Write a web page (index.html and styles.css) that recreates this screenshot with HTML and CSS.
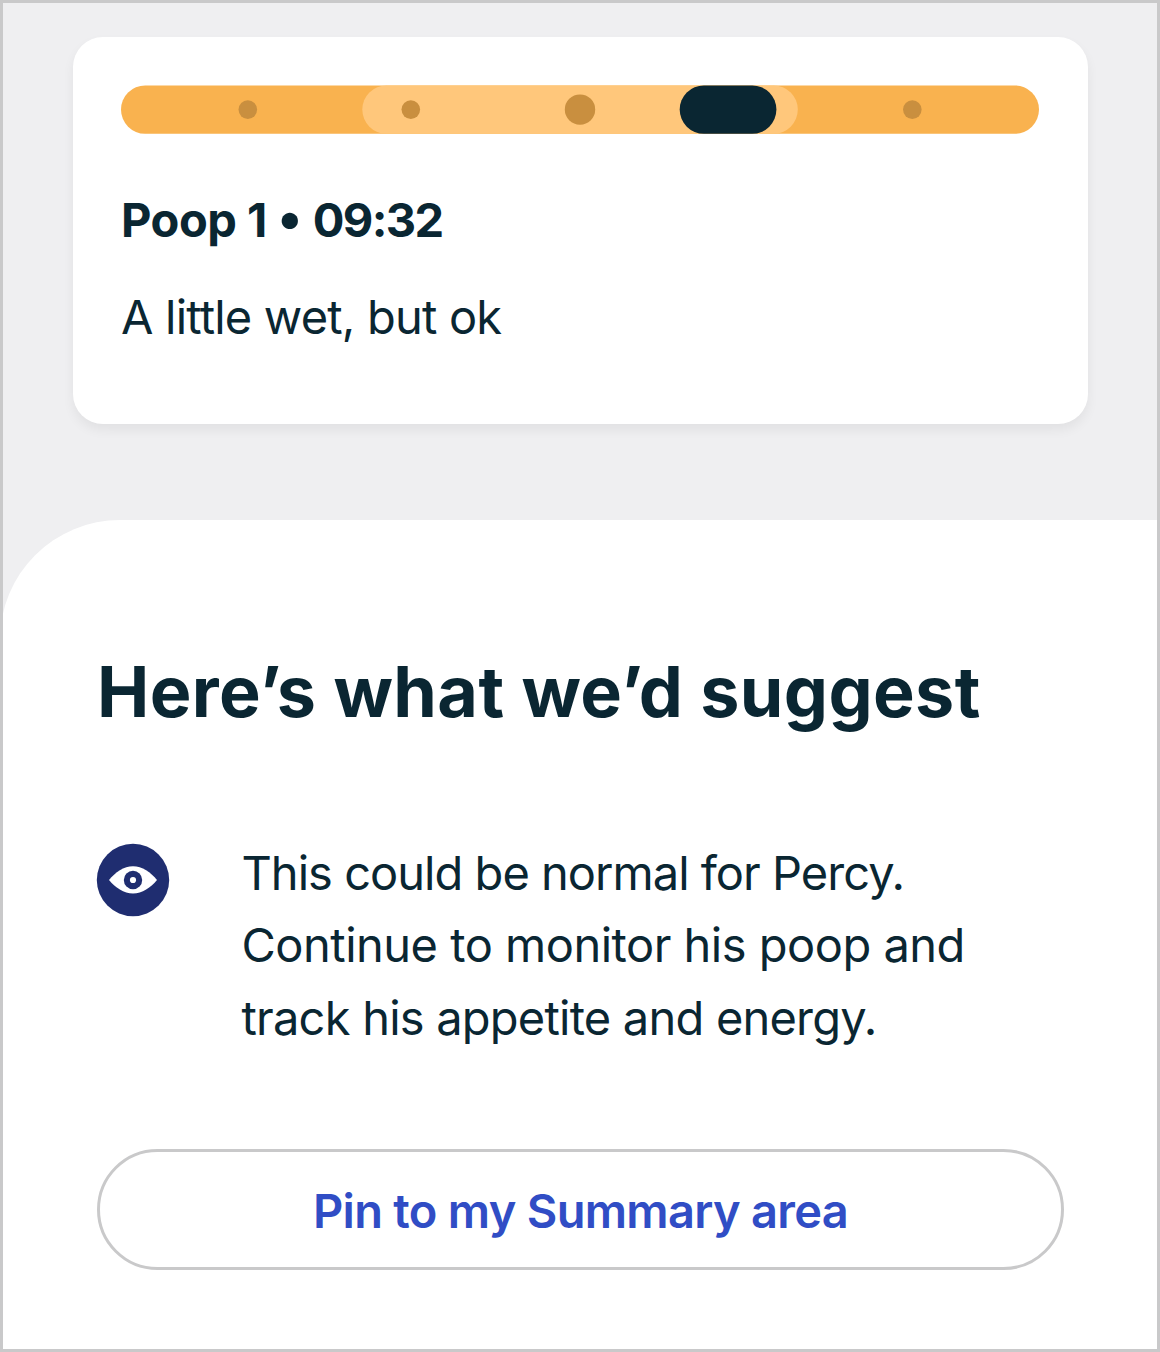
FILE: index.html
```html
<!DOCTYPE html>
<html lang="en">
<head>
<meta charset="utf-8">
<title>Poop summary</title>
<link rel="stylesheet" href="styles.css">
</head>
<body>
<main class="screen">
  <section class="result">
    <article class="card">
      <svg class="scale" viewBox="0 0 918 49" aria-hidden="true">
        <rect class="scale-track" y=".4" width="918" height="48.4" rx="24.2"/>
        <rect class="scale-range" x="241.3" y=".4" width="435.5" height="48.4" rx="24.2"/>
        <circle class="scale-dot" cx="126.8" cy="24.6" r="9.3"/>
        <circle class="scale-dot" cx="289.8" cy="24.6" r="9.3"/>
        <circle class="scale-dot" cx="459" cy="24.6" r="15.2"/>
        <circle class="scale-dot" cx="791.3" cy="24.6" r="9.3"/>
        <rect class="scale-marker" x="558.7" y=".4" width="96.7" height="48.4" rx="24.2"/>
      </svg>
      <h2 class="card-title"><span class="name">Poop 1</span><span class="bullet">•</span><span class="time">09:32</span></h2>
      <p class="card-text">A little wet, but ok</p>
    </article>
  </section>
  <section class="advice">
    <h1 class="advice-title">Here’s what we’d suggest</h1>
    <div class="tip">
      <svg class="tip-icon" viewBox="0 0 73 73" aria-hidden="true">
        <circle class="icon-blue" cx="36" cy="36" r="36.2"/>
        <path class="icon-white" d="M12 36C18 28.5 27 22.3 36 22.3S54 28.5 60 36C54 43.5 45 49.5 36 49.5S18 43.5 12 36Z"/>
        <circle class="icon-blue" cx="36" cy="36" r="9.2"/>
        <circle class="icon-white" cx="36" cy="36" r="3.1"/>
      </svg>
      <p class="tip-text"><span class="line line-1">This could be normal for Percy.</span> <span class="line line-2">Continue to monitor his poop and</span> <span class="line line-3">track his appetite and energy.</span></p>
    </div>
    <button class="pin" type="button">Pin to my Summary area</button>
  </section>
</main>
</body>
</html>
```
FILE: styles.css
```css
* {
  box-sizing: border-box;
  margin: 0;
}

body {
  font-family: Inter, "Liberation Sans", sans-serif;
  color: #0a2632;
}

.screen {
  position: relative;
  display: flex;
  flex-direction: column;
  width: 1160px;
  height: 1352px;
  background: #efeff1;
}

/* The frame lies over the sections, so it clips the rounded corner. */
.screen::after {
  content: "";
  position: absolute;
  inset: 0;
  border: 3px solid #c9c9ca;
  pointer-events: none;
}

.result {
  height: 520px;
  padding: 37px 72px 0 73px;
}

.card {
  height: 387px;
  padding: 48px;
  border-radius: 30px;
  background: #fff;
  box-shadow: 0 6px 12px rgba(0, 0, 0, 0.06);
}

.scale {
  display: block;
  width: 918px;
  height: 49px;
  margin-bottom: 50px;
}

.scale-track { fill: #f9b24f; }
.scale-range { fill: #ffc77b; }
.scale-dot { fill: #c98f3f; }
.scale-marker { fill: #0a2632; }

.card-title,
.card-text,
.tip-text {
  font-size: 47px;
  line-height: 72.5px;
  white-space: nowrap;
}

.card-title {
  display: flex;
  height: 72.5px;
  margin-bottom: 24px;
  font-weight: 700;
}

.name {
  letter-spacing: -0.5px;
}

.bullet {
  width: 46px;
  font-size: 52px;
  line-height: 67px;
  letter-spacing: 0;
  text-align: center;
}

.time {
  letter-spacing: -1.6px;
}

.card-text {
  letter-spacing: -0.8px;
}

.advice {
  flex: 1;
  padding: 124px 96px 0 97px;
  border-top-left-radius: 120px;
  background: #fff;
}

.advice-title {
  margin-bottom: 96px;
  font-size: 70px;
  font-weight: 700;
  line-height: 96px;
  letter-spacing: 0.4px;
  white-space: nowrap;
}

.tip {
  display: flex;
  gap: 71.5px;
  height: 218px;
  margin-bottom: 95px;
}

.tip-icon {
  flex: none;
  width: 73px;
  height: 73px;
  margin-top: 8px;
  overflow: visible;
}

.icon-blue { fill: #1f2d70; }
.icon-white { fill: #fff; }

.tip-text {
  padding-top: 1px;
  line-height: 72.3px;
}

.line {
  display: block;
}

.line-1 { letter-spacing: -0.97px; }
.line-2 { letter-spacing: -0.5px; }
.line-3 { letter-spacing: -0.78px; }

.pin {
  display: block;
  width: 967px;
  height: 121px;
  padding: 3px 0 0;
  border: 3px solid #c9c9ca;
  border-radius: 61px;
  background: #fff;
  color: #304dc5;
  font: 600 47px/72px Inter, "Liberation Sans", sans-serif;
  letter-spacing: -0.7px;
}
```
